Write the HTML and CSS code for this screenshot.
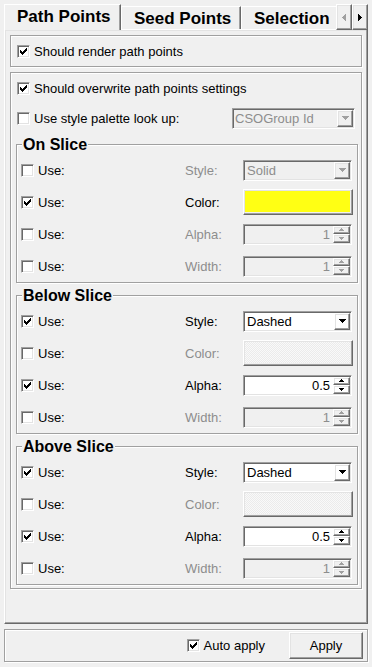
FILE: index.html
```html
<!DOCTYPE html>
<html lang="en">
<head>
  <meta charset="UTF-8">
  <title>Path Points</title>
  <link rel="stylesheet" href="styles.css">
</head>
<body>

  <div class="tabbar">
    <div class="tab current">Path Points</div>
    <div class="tab">Seed Points</div>
    <div class="tab last">Selection</div>
    <div class="scrollbtn off"><svg width="4" height="7" viewBox="0 0 4 7"><path d="M3 0h1v7h-1v-1h-1v-1h-1v-1h-1v-1h1v-1h1v-1h1z"/></svg></div>
    <div class="scrollbtn"><svg width="4" height="7" viewBox="0 0 4 7"><path d="M0 0h1v1h1v1h1v1h1v1h-1v1h-1v1h-1v1h-1z"/></svg></div>
  </div>

  <div class="pane">
    <div class="frame render">
      <span class="cb"><svg width="7" height="7" viewBox="0 0 7 7"><path d="M6 0h1v1h-1zM5 1h2v1h-2zM0 2h1v1h-1zM4 2h3v1h-3zM0 3h2v1h-2zM3 3h3v1h-3zM0 4h5v1h-5zM1 5h3v1h-3zM2 6h1v1h-1z"/></svg></span>
      <span>Should render path points</span>
    </div>

    <div class="frame settings">
      <div class="line">
        <span class="cb"><svg width="7" height="7" viewBox="0 0 7 7"><path d="M6 0h1v1h-1zM5 1h2v1h-2zM0 2h1v1h-1zM4 2h3v1h-3zM0 3h2v1h-2zM3 3h3v1h-3zM0 4h5v1h-5zM1 5h3v1h-3zM2 6h1v1h-1z"/></svg></span>
        <span>Should overwrite path points settings</span>
      </div>
      <div class="line">
        <span class="cb"></span>
        <span>Use style palette look up:</span>
        <div class="combo off palette">
          <span class="val">CSOGroup Id</span>
          <span class="drop"><svg width="7" height="4" viewBox="0 0 7 4"><path d="M0 0h7v1h-1v1h-1v1h-1v1h-1v-1h-1v-1h-1v-1h-1z"/></svg></span>
        </div>
      </div>

      <fieldset class="group">
        <legend>On Slice</legend>
        <div class="prop">
          <div class="use"><span class="cb"></span>Use:</div>
          <span class="name off">Style:</span>
          <div class="combo off">
            <span class="val">Solid</span>
            <span class="drop"><svg width="7" height="4" viewBox="0 0 7 4"><path d="M0 0h7v1h-1v1h-1v1h-1v1h-1v-1h-1v-1h-1v-1h-1z"/></svg></span>
          </div>
        </div>
        <div class="prop">
          <div class="use"><span class="cb"><svg width="7" height="7" viewBox="0 0 7 7"><path d="M6 0h1v1h-1zM5 1h2v1h-2zM0 2h1v1h-1zM4 2h3v1h-3zM0 3h2v1h-2zM3 3h3v1h-3zM0 4h5v1h-5zM1 5h3v1h-3zM2 6h1v1h-1z"/></svg></span>Use:</div>
          <span class="name">Color:</span>
          <div class="colorbtn"><span class="swatch yellow"></span></div>
        </div>
        <div class="prop">
          <div class="use"><span class="cb"></span>Use:</div>
          <span class="name off">Alpha:</span>
          <div class="spin off">
            <span class="val">1</span>
            <span class="arrows">
              <span><svg width="5" height="3" viewBox="0 0 5 3"><path d="M2 0h1v1h1v1h1v1h-5v-1h1v-1h1z"/></svg></span>
              <span><svg width="5" height="3" viewBox="0 0 5 3"><path d="M0 0h5v1h-1v1h-1v1h-1v-1h-1v-1h-1z"/></svg></span>
            </span>
          </div>
        </div>
        <div class="prop">
          <div class="use"><span class="cb"></span>Use:</div>
          <span class="name off">Width:</span>
          <div class="spin off">
            <span class="val">1</span>
            <span class="arrows">
              <span><svg width="5" height="3" viewBox="0 0 5 3"><path d="M2 0h1v1h1v1h1v1h-5v-1h1v-1h1z"/></svg></span>
              <span><svg width="5" height="3" viewBox="0 0 5 3"><path d="M0 0h5v1h-1v1h-1v1h-1v-1h-1v-1h-1z"/></svg></span>
            </span>
          </div>
        </div>
      </fieldset>

      <fieldset class="group">
        <legend>Below Slice</legend>
        <div class="prop">
          <div class="use"><span class="cb"><svg width="7" height="7" viewBox="0 0 7 7"><path d="M6 0h1v1h-1zM5 1h2v1h-2zM0 2h1v1h-1zM4 2h3v1h-3zM0 3h2v1h-2zM3 3h3v1h-3zM0 4h5v1h-5zM1 5h3v1h-3zM2 6h1v1h-1z"/></svg></span>Use:</div>
          <span class="name">Style:</span>
          <div class="combo">
            <span class="val">Dashed</span>
            <span class="drop"><svg width="7" height="4" viewBox="0 0 7 4"><path d="M0 0h7v1h-1v1h-1v1h-1v1h-1v-1h-1v-1h-1v-1h-1z"/></svg></span>
          </div>
        </div>
        <div class="prop">
          <div class="use"><span class="cb"></span>Use:</div>
          <span class="name off">Color:</span>
          <div class="colorbtn"><span class="swatch blank"></span></div>
        </div>
        <div class="prop">
          <div class="use"><span class="cb"><svg width="7" height="7" viewBox="0 0 7 7"><path d="M6 0h1v1h-1zM5 1h2v1h-2zM0 2h1v1h-1zM4 2h3v1h-3zM0 3h2v1h-2zM3 3h3v1h-3zM0 4h5v1h-5zM1 5h3v1h-3zM2 6h1v1h-1z"/></svg></span>Use:</div>
          <span class="name">Alpha:</span>
          <div class="spin">
            <span class="val">0.5</span>
            <span class="arrows">
              <span><svg width="5" height="3" viewBox="0 0 5 3"><path d="M2 0h1v1h1v1h1v1h-5v-1h1v-1h1z"/></svg></span>
              <span><svg width="5" height="3" viewBox="0 0 5 3"><path d="M0 0h5v1h-1v1h-1v1h-1v-1h-1v-1h-1z"/></svg></span>
            </span>
          </div>
        </div>
        <div class="prop">
          <div class="use"><span class="cb"></span>Use:</div>
          <span class="name off">Width:</span>
          <div class="spin off">
            <span class="val">1</span>
            <span class="arrows">
              <span><svg width="5" height="3" viewBox="0 0 5 3"><path d="M2 0h1v1h1v1h1v1h-5v-1h1v-1h1z"/></svg></span>
              <span><svg width="5" height="3" viewBox="0 0 5 3"><path d="M0 0h5v1h-1v1h-1v1h-1v-1h-1v-1h-1z"/></svg></span>
            </span>
          </div>
        </div>
      </fieldset>

      <fieldset class="group">
        <legend>Above Slice</legend>
        <div class="prop">
          <div class="use"><span class="cb"><svg width="7" height="7" viewBox="0 0 7 7"><path d="M6 0h1v1h-1zM5 1h2v1h-2zM0 2h1v1h-1zM4 2h3v1h-3zM0 3h2v1h-2zM3 3h3v1h-3zM0 4h5v1h-5zM1 5h3v1h-3zM2 6h1v1h-1z"/></svg></span>Use:</div>
          <span class="name">Style:</span>
          <div class="combo">
            <span class="val">Dashed</span>
            <span class="drop"><svg width="7" height="4" viewBox="0 0 7 4"><path d="M0 0h7v1h-1v1h-1v1h-1v1h-1v-1h-1v-1h-1v-1h-1z"/></svg></span>
          </div>
        </div>
        <div class="prop">
          <div class="use"><span class="cb"></span>Use:</div>
          <span class="name off">Color:</span>
          <div class="colorbtn"><span class="swatch blank"></span></div>
        </div>
        <div class="prop">
          <div class="use"><span class="cb"><svg width="7" height="7" viewBox="0 0 7 7"><path d="M6 0h1v1h-1zM5 1h2v1h-2zM0 2h1v1h-1zM4 2h3v1h-3zM0 3h2v1h-2zM3 3h3v1h-3zM0 4h5v1h-5zM1 5h3v1h-3zM2 6h1v1h-1z"/></svg></span>Use:</div>
          <span class="name">Alpha:</span>
          <div class="spin">
            <span class="val">0.5</span>
            <span class="arrows">
              <span><svg width="5" height="3" viewBox="0 0 5 3"><path d="M2 0h1v1h1v1h1v1h-5v-1h1v-1h1z"/></svg></span>
              <span><svg width="5" height="3" viewBox="0 0 5 3"><path d="M0 0h5v1h-1v1h-1v1h-1v-1h-1v-1h-1z"/></svg></span>
            </span>
          </div>
        </div>
        <div class="prop">
          <div class="use"><span class="cb"></span>Use:</div>
          <span class="name off">Width:</span>
          <div class="spin off">
            <span class="val">1</span>
            <span class="arrows">
              <span><svg width="5" height="3" viewBox="0 0 5 3"><path d="M2 0h1v1h1v1h1v1h-5v-1h1v-1h1z"/></svg></span>
              <span><svg width="5" height="3" viewBox="0 0 5 3"><path d="M0 0h5v1h-1v1h-1v1h-1v-1h-1v-1h-1z"/></svg></span>
            </span>
          </div>
        </div>
      </fieldset>
    </div>
  </div>

  <div class="frame footer">
    <span class="cb"><svg width="7" height="7" viewBox="0 0 7 7"><path d="M6 0h1v1h-1zM5 1h2v1h-2zM0 2h1v1h-1zM4 2h3v1h-3zM0 3h2v1h-2zM3 3h3v1h-3zM0 4h5v1h-5zM1 5h3v1h-3zM2 6h1v1h-1z"/></svg></span>
    <span class="auto">Auto apply</span>
    <div class="button">Apply</div>
  </div>

</body>
</html>
```

FILE: styles.css
```css
body {
  margin: 0;
  height: 667px;
  display: flex;
  flex-direction: column;
  background: #f0f0f0;
  color: #000;
  font-family: "Liberation Sans", Arial, sans-serif;
  font-size: 13px;
}
svg {
  display: block;
  fill: currentColor;
  shape-rendering: crispEdges;
}

/* tabs */
.tabbar {
  flex: none;
  display: flex;
  align-items: flex-end;
  height: 29px;
  padding-left: 4px;
}
.tab {
  box-sizing: border-box;
  height: 23px;
  padding: 2px 0 0 12px;
  background: #f0f0f0;
  border-top: 1px solid #fff;
  border-left: 1px solid #fff;
  border-right: 1px solid #696969;
  box-shadow: inset -1px 0 #a0a0a0;
  font-size: 17px;
  font-weight: bold;
  line-height: 20px;
  white-space: nowrap;
  width: 120px;
}
.tab.current {
  position: relative;
  z-index: 1;
  width: 117px;
  height: 26px;
  margin-bottom: -1px;
}
.tab.last {
  width: 95px;
  border-right: none;
  box-shadow: none;
}
.scrollbtn {
  position: relative;
  z-index: 1;
  box-sizing: border-box;
  width: 16px;
  height: 26px;
  margin-bottom: -1px;
  display: flex;
  align-items: center;
  justify-content: center;
  border: 1px solid;
  border-color: #fff #696969 #696969 #fff;
  box-shadow: inset -1px -1px #a0a0a0, inset 1px 1px #e3e3e3;
}
.scrollbtn.off {
  color: #a0a0a0;
}

/* tab page */
.pane {
  flex: 1;
  margin: 0 4px;
  padding: 5px;
  border: 1px solid;
  border-color: #fff #696969 #696969 #fff;
  box-shadow: inset -1px -1px #a0a0a0, inset 1px 1px #e3e3e3;
}
.frame {
  border: 1px solid #a0a0a0;
  box-shadow: inset 1px 1px #fff, 1px 1px #fff;
}
.render {
  box-sizing: border-box;
  height: 32px;
  display: flex;
  align-items: center;
  gap: 4px;
  padding-left: 6px;
}
.settings {
  margin-top: 5px;
  padding: 0 3px 3px 6px;
}
.line {
  display: flex;
  align-items: center;
  gap: 4px;
  height: 30px;
}

/* checkbox */
.cb {
  box-sizing: border-box;
  flex: none;
  width: 13px;
  height: 13px;
  display: flex;
  align-items: center;
  justify-content: center;
  background: #fff;
  border: 1px solid;
  border-color: #a0a0a0 #fff #fff #a0a0a0;
  box-shadow: inset 1px 1px #696969, inset -1px -1px #e3e3e3;
}

/* groups */
.group {
  min-width: 0;
  margin: 4px 0 0 -1px;
  padding: 2px 5px 0 4px;
  border: 1px solid #a0a0a0;
  box-shadow: inset 1px 1px #fff, 1px 1px #fff;
}
.group + .group {
  margin-top: 5px;
}
.group legend {
  margin-left: 1px;
  padding: 0 1px;
  background: #f0f0f0;
  font-size: 16px;
  font-weight: bold;
  line-height: 15px;
}
.prop {
  display: grid;
  grid-template-columns: 1fr 58px 109px;
  align-items: center;
  height: 32px;
}
.use {
  display: flex;
  align-items: center;
  gap: 4px;
}
.name.off,
.off .val {
  color: #8d8d8d;
}

/* inputs */
.combo,
.spin {
  box-sizing: border-box;
  height: 21px;
  display: flex;
  align-items: center;
  background: #fff;
  border: 1px solid;
  border-color: #a0a0a0 #fff #fff #a0a0a0;
  box-shadow: inset 1px 1px #696969, inset -1px -1px #e3e3e3;
  padding: 0 1px 0 3px;
}
.combo.off,
.spin.off {
  background: #f0f0f0;
}
.combo .val {
  flex: 1;
}
.palette {
  width: 123px;
  margin: 0 3px 0 auto;
  padding-left: 2px;
}
.drop,
.arrows span,
.button {
  box-sizing: border-box;
  border: 1px solid;
  border-color: #fff #696969 #696969 #fff;
  box-shadow: inset -1px -1px #a0a0a0, inset 1px 1px #e3e3e3;
}
.drop {
  width: 16px;
  height: 17px;
  display: flex;
  align-items: center;
  justify-content: center;
}
.off .drop,
.off .arrows {
  color: #a0a0a0;
}
.spin .val {
  flex: 1;
  text-align: right;
  padding-right: 3px;
}
.arrows {
  display: flex;
  flex-direction: column;
  width: 17px;
  height: 17px;
}
.arrows span {
  flex: 1;
  display: flex;
  align-items: center;
  justify-content: center;
}
.colorbtn {
  box-sizing: border-box;
  height: 26px;
  width: 110px;
  margin-right: -1px;
  padding: 1px 2px 2px 1px;
  border: 1px solid;
  border-color: #fff #696969 #696969 #fff;
  box-shadow: inset -1px -1px #a0a0a0, inset 1px 1px #e3e3e3;
}
.swatch {
  display: block;
  height: 100%;
}
.swatch.yellow {
  background: #ffff14;
}
.swatch.blank {
  background: repeating-conic-gradient(#f9f9f9 0 25%, #ebebeb 0 50%) 0 0 / 2px 2px;
}

/* bottom bar */
.footer {
  flex: none;
  box-sizing: border-box;
  height: 33px;
  margin: 5px 4px;
  display: flex;
  align-items: center;
  justify-content: flex-end;
  padding-right: 4px;
}
.footer .auto {
  margin: 0 24px 0 4px;
}
.button {
  width: 74px;
  height: 27px;
  display: flex;
  align-items: center;
  justify-content: center;
}
```
